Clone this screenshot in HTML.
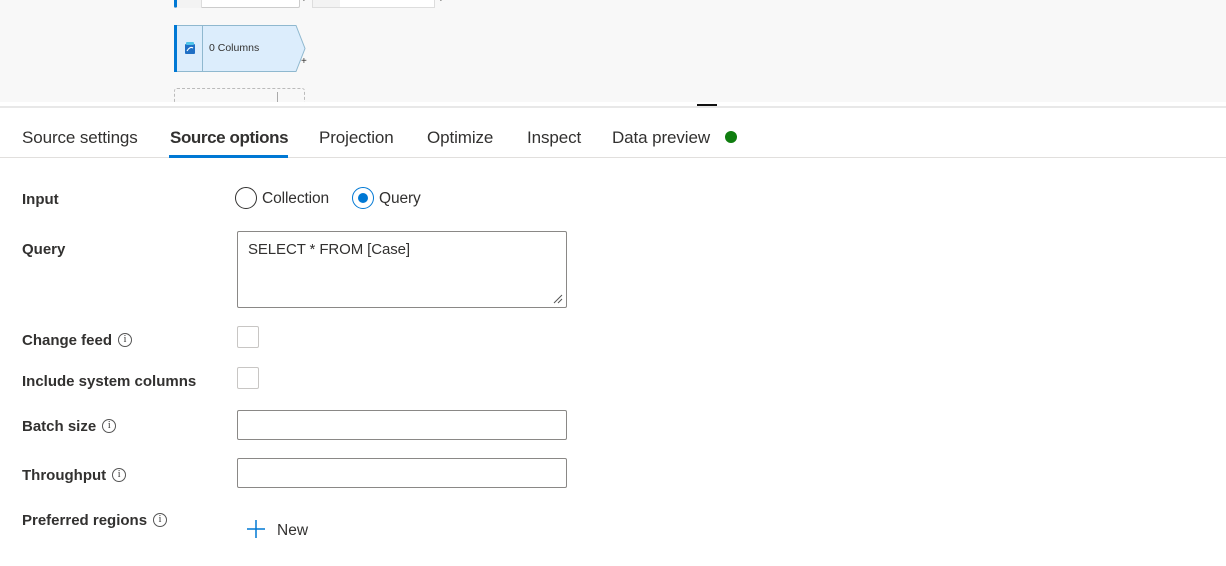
<!DOCTYPE html>
<html><head><style>
*{margin:0;padding:0;box-sizing:border-box}
body{width:1226px;height:566px;background:#fff;font-family:"Liberation Sans",sans-serif;color:#323130;position:relative;overflow:hidden}
.abs{position:absolute}
.top{left:0;top:0;width:1226px;height:102px;background:#f8f8f8}
.tab{position:absolute;top:128px;font-size:17px;color:#323130;letter-spacing:-0.1px}
.lbl{position:absolute;left:22px;font-size:15px;font-weight:bold;color:#323130;letter-spacing:0}
.info{display:inline-block;width:14px;height:14px;border:1px solid #555;border-radius:50%;font-size:10px;line-height:12px;text-align:center;font-weight:normal;vertical-align:3px;margin-left:6px;font-family:"Liberation Serif",serif}
.box{position:absolute;left:237px;width:330px;border:1px solid #8a8886;border-radius:2px;background:#fff}
.cb{position:absolute;left:237px;width:22px;height:22px;border:1px solid #c8c6c4;border-radius:2px}
</style></head><body>
<div class="abs top"></div>
<div class="abs" style="left:174px;top:-2px;width:126px;height:10px;background:#fff;border:1px solid #ccc;border-left:3px solid #0078d4;border-radius:0 0 2px 2px"></div>
<div class="abs" style="left:177px;top:-2px;width:25px;height:10px;background:#f3f3f3;border-right:1px solid #ddd"></div>
<div class="abs" style="left:312px;top:-2px;width:123px;height:10px;background:#fff;border:1px solid #ddd"></div>
<div class="abs" style="left:313px;top:-2px;width:27px;height:9px;background:#f3f3f3"></div>
<span class="abs" style="left:301px;top:-6px;font-size:10px">+</span>
<span class="abs" style="left:438px;top:-6px;font-size:10px">+</span>
<svg class="abs" style="left:173px;top:24px" width="135" height="49">
<path d="M1.5 1.5 H123 L132 24.5 L123 47.5 H1.5 Z" fill="#dcedfc" stroke="#8fb8cf" stroke-width="1"/>
<rect x="1" y="1" width="3" height="47" fill="#0078d4"/>
<line x1="29.5" y1="1.5" x2="29.5" y2="47.5" stroke="#8fb8cf"/>
<rect x="12" y="20" width="10" height="10" rx="1" fill="#1f6fc5"/>
<rect x="13" y="18" width="8" height="3" rx="1" fill="#4fc3e8"/>
<path d="M14 27 q3 -5 6 -3" stroke="#fff" stroke-width="1.2" fill="none"/>
</svg>
<span class="abs" style="left:209px;top:42px;font-size:10.5px;color:#323130">0 Columns</span>
<span class="abs" style="left:301px;top:56px;font-size:10px">+</span>
<div class="abs" style="left:174px;top:88px;width:131px;height:20px;border:1px dashed #bbb;border-radius:3px"></div>
<div class="abs" style="left:277px;top:92px;width:1px;height:10px;background:#aaa"></div>
<div class="abs" style="left:0;top:102px;width:1226px;height:4px;background:#fff"></div>
<div class="abs" style="left:0;top:106px;width:1226px;height:2px;background:#e8e8e8"></div>
<div class="abs" style="left:697px;top:104px;width:20px;height:2px;background:#111"></div>
<span class="tab" style="left:22px">Source settings</span>
<span class="tab" style="left:170px;font-weight:bold;letter-spacing:-0.4px">Source options</span>
<span class="tab" style="left:319px">Projection</span>
<span class="tab" style="left:427px">Optimize</span>
<span class="tab" style="left:527px">Inspect</span>
<span class="tab" style="left:612px">Data preview</span>
<div class="abs" style="left:725px;top:131px;width:12px;height:12px;border-radius:50%;background:#0f7d0f"></div>
<div class="abs" style="left:0;top:157px;width:1226px;height:1px;background:#e1dfdd"></div>
<div class="abs" style="left:169px;top:155px;width:119px;height:3px;background:#0078d4"></div>
<div class="lbl" style="top:191px">Input</div>
<div class="abs" style="left:235px;top:187px;width:22px;height:22px;border:1px solid #323130;border-radius:50%"></div>
<span class="abs" style="left:262px;top:190px;font-size:15.5px;letter-spacing:-0.1px">Collection</span>
<div class="abs" style="left:352px;top:187px;width:22px;height:22px;border:1px solid #0078d4;border-radius:50%"></div>
<div class="abs" style="left:358px;top:193px;width:10px;height:10px;background:#0078d4;border-radius:50%"></div>
<span class="abs" style="left:379px;top:190px;font-size:15.5px;letter-spacing:-0.1px">Query</span>
<div class="lbl" style="top:241px">Query</div>
<div class="box" style="top:231px;height:77px"></div>
<span class="abs" style="left:248px;top:241px;font-size:15px;letter-spacing:-0.1px">SELECT * FROM [Case]</span>
<svg class="abs" style="left:552px;top:293px" width="12" height="12"><path d="M2 10 L10 2 M6 10 L10 6" stroke="#555" stroke-width="1"/></svg>
<div class="lbl" style="top:332px">Change feed<span class="info">i</span></div>
<div class="cb" style="top:326px"></div>
<div class="lbl" style="top:373px">Include system columns</div>
<div class="cb" style="top:367px"></div>
<div class="lbl" style="top:418px">Batch size<span class="info">i</span></div>
<div class="box" style="top:410px;height:30px"></div>
<div class="lbl" style="top:467px">Throughput<span class="info">i</span></div>
<div class="box" style="top:458px;height:30px"></div>
<div class="lbl" style="top:512px">Preferred regions<span class="info">i</span></div>
<svg class="abs" style="left:246px;top:519px" width="20" height="20"><path d="M10 1 V19 M1 10 H19" stroke="#0078d4" stroke-width="1.5"/></svg>
<span class="abs" style="left:277px;top:522px;font-size:15.5px">New</span>
</body></html>
